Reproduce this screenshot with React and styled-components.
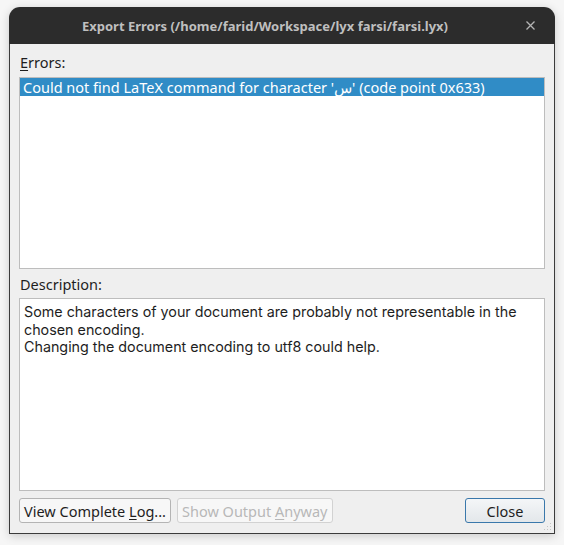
import React from "react";
import styled, { createGlobalStyle } from "styled-components";

const Global = createGlobalStyle`
  html, body {
    margin: 0;
    padding: 0;
    background: #f6f6f6;
  }
  body {
    font-family: "Noto Sans", "Open Sans", sans-serif;
  }
`;

const Screen = styled.div`
  width: 564px;
  height: 545px;
  padding: 7px 9px 0 9px;
  box-sizing: border-box;
`;

const Window = styled.div`
  width: 546px;
  height: 527px;
  display: flex;
  flex-direction: column;
  border-radius: 11px 11px 0 0;
  overflow: hidden;
  box-shadow: 0 2px 10px rgba(0, 0, 0, 0.18);
`;

const TitleBar = styled.div`
  height: 37px;
  flex-shrink: 0;
  background: #2c2c2c;
  color: #bfbfbf;
  font-weight: bold;
  font-size: 13px;
  display: flex;
  align-items: center;
  justify-content: center;
  padding-right: 34px;
  position: relative;
`;

const CloseX = styled.span`
  position: absolute;
  right: 20px;
  top: 14px;
  width: 9px;
  height: 9px;
  display: flex;
`;

const Body = styled.div`
  flex: 1;
  background: #efefef;
  border: 1px solid #3b3b3b;
  border-top: none;
  padding: 8px 9px 0 9px;
  display: flex;
  flex-direction: column;
  position: relative;
  font-size: 14.5px;
  color: #1e1e1e;
`;

const Label = styled.div`
  height: 20px;
  line-height: 20px;
  margin-left: 1px;
  margin-bottom: ${(p) => p.gap || 5}px;
  & u {
    text-decoration-thickness: 1px;
    text-underline-offset: 2px;
  }
`;

const ListBox = styled.div`
  height: 192px;
  box-sizing: border-box;
  background: #fff;
  border: 1px solid #bdbdbd;
  margin-bottom: 5px;
`;

const ListRow = styled.div`
  height: 18px;
  line-height: 18px;
  background: ${(p) => (p.selected ? "#308cc6" : "transparent")};
  color: ${(p) => (p.selected ? "#fff" : "inherit")};
  padding-left: 3px;
  white-space: nowrap;
`;

const TextBox = styled.div`
  height: 193px;
  background: #fff;
  border: 1px solid #bdbdbd;
  padding: 4px 4px;
  box-sizing: border-box;
  font-family: "Inter", "Noto Sans", sans-serif;
  font-size: 14.3px;
  line-height: 17.5px;
  margin-bottom: 7px;
`;

const ButtonRow = styled.div`
  display: flex;
  align-items: center;
  gap: 6px;
`;

const Button = styled.button`
  height: 25px;
  padding: 0 4px;
  min-width: ${(p) => p.minW || 0}px;
  font-family: inherit;
  font-size: 14.5px;
  border-radius: 3px;
  background: ${(p) => (p.primary ? "linear-gradient(#f4f6f8, #e3e7ea)" : "#f7f7f7")};
  border: 1px solid ${(p) => (p.primary ? "#3a78ab" : p.disabled ? "#d2d2d2" : "#b4b4b4")};
  color: ${(p) => (p.disabled ? "#b8b8b8" : "#1e1e1e")};
  ${(p) => (p.right ? "margin-left: auto;" : "")}
  & u {
    text-underline-offset: 2px;
  }
`;

const Grip = styled.svg`
  position: absolute;
  right: 2px;
  bottom: 2px;
`;

export default function App() {
  return (
    <>
      <Global />
      <Screen>
        <Window>
          <TitleBar>
            Export Errors (/home/farid/Workspace/lyx farsi/farsi.lyx)
            <CloseX>
              <svg width="9" height="9" viewBox="0 0 9 9">
                <path d="M0.5 0.5L8.5 8.5M8.5 0.5L0.5 8.5" stroke="#b4b4b4" strokeWidth="1.3" />
              </svg>
            </CloseX>
          </TitleBar>
          <Body>
            <Label>
              <u>E</u>rrors:
            </Label>
            <ListBox>
              <ListRow selected>
                Could not find LaTeX command for character 'س' (code point 0x633)
              </ListRow>
            </ListBox>
            <Label gap={4}>Description:</Label>
            <TextBox>
              Some characters of your document are probably not representable in the
              <br />
              chosen encoding.
              <br />
              Changing the document encoding to utf8 could help.
            </TextBox>
            <ButtonRow>
              <Button>
                View Complete <u>L</u>og...
              </Button>
              <Button disabled>
                Show Output <u>A</u>nyway
              </Button>
              <Button primary right minW={80}>
                Close
              </Button>
            </ButtonRow>
            <Grip width="8" height="8" viewBox="0 0 8 8">
              <g fill="#c4c4c4">
                <rect x="6" y="0" width="1" height="1" />
                <rect x="3" y="3" width="1" height="1" />
                <rect x="6" y="3" width="1" height="1" />
                <rect x="0" y="6" width="1" height="1" />
                <rect x="3" y="6" width="1" height="1" />
                <rect x="6" y="6" width="1" height="1" />
              </g>
            </Grip>
          </Body>
        </Window>
      </Screen>
    </>
  );
}
